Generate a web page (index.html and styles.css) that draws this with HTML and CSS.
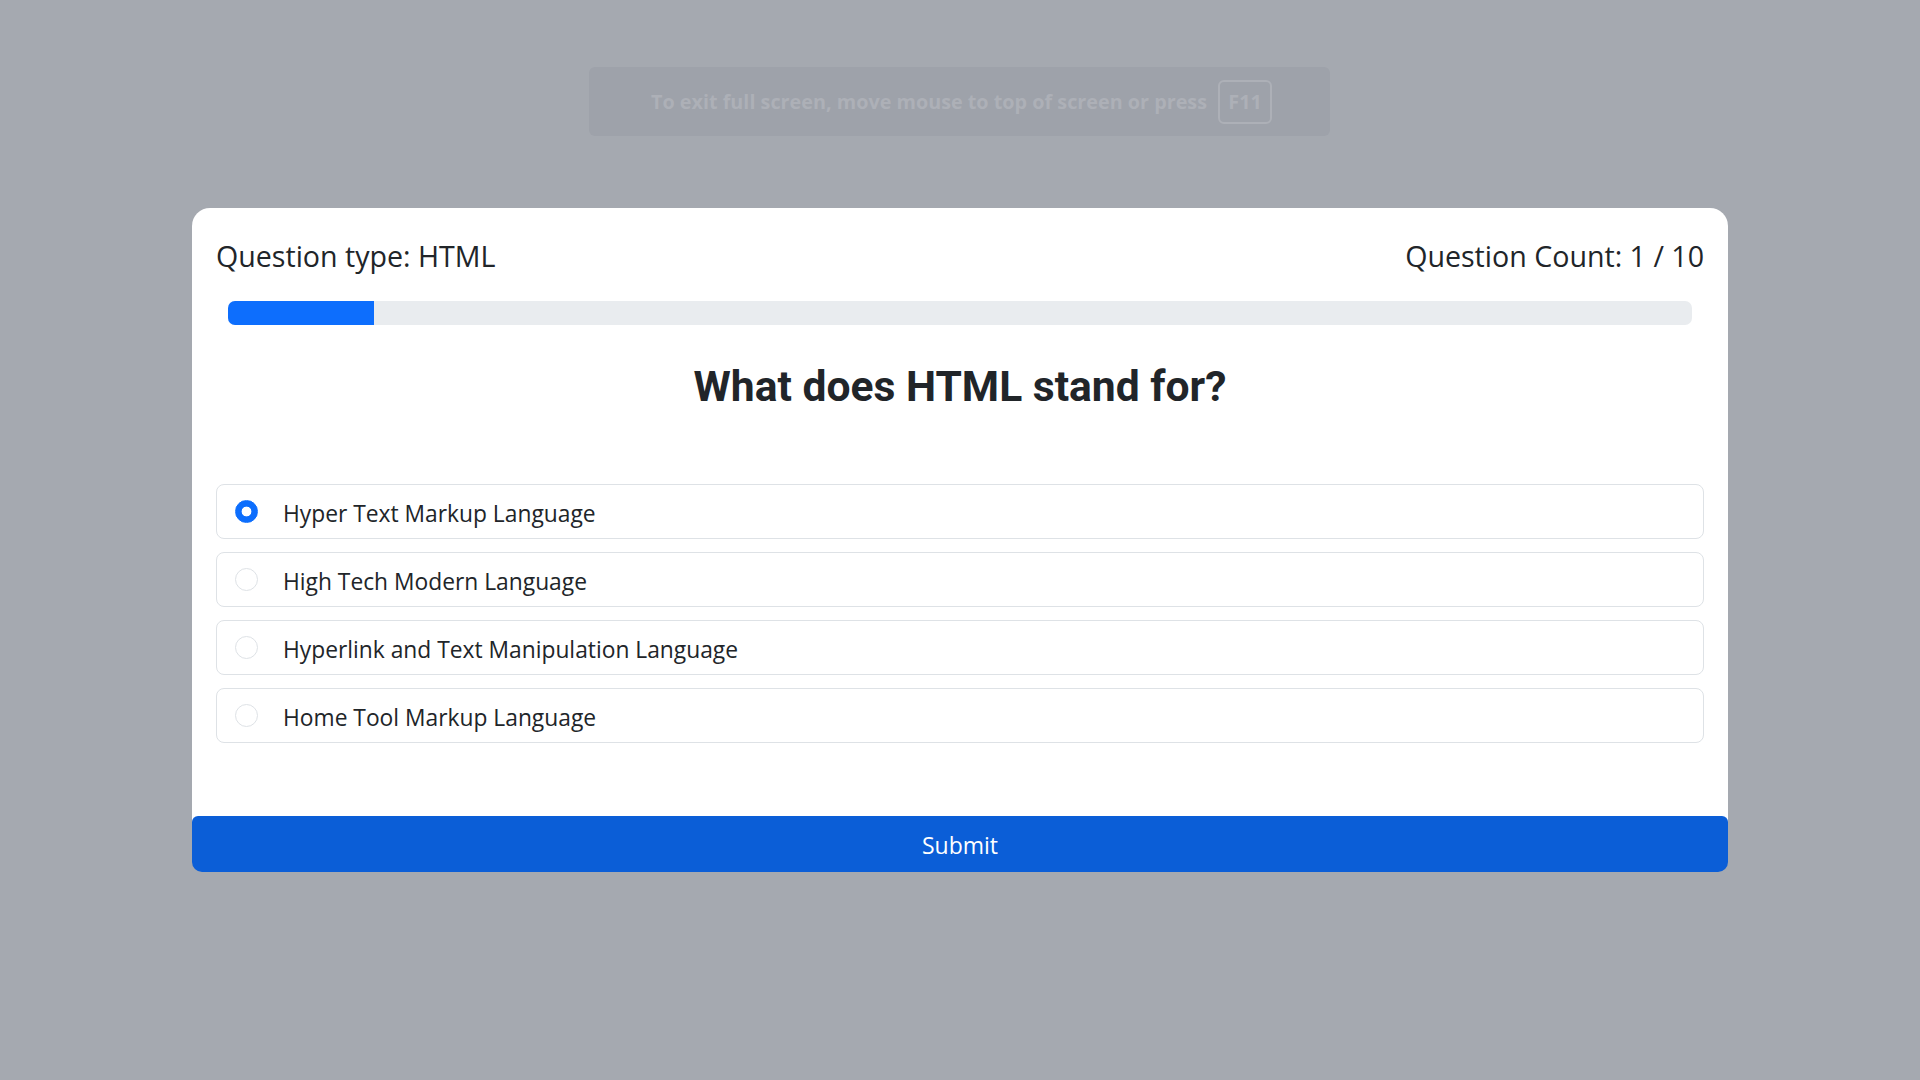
FILE: index.html
```html
<!DOCTYPE html>
<html lang="en">
<head>
<meta charset="utf-8">
<title>Quiz</title>
<link rel="stylesheet" href="styles.css">
</head>
<body>
<div class="fs-notice">
  <span class="fs-text">To exit full screen, move mouse to top of screen or press</span>
  <span class="fs-key">F11</span>
</div>
<main class="card">
  <div class="card-head">
    <div class="qtype">Question type: HTML</div>
    <div class="qcount">Question Count: 1 / 10</div>
  </div>
  <div class="progress"><div class="progress-fill" style="width:10%"></div></div>
  <h2 class="question">What does HTML stand for?</h2>
  <div class="options">
    <label class="option"><span class="radio checked"></span><span class="opt-text">Hyper Text Markup Language</span></label>
    <label class="option"><span class="radio"></span><span class="opt-text">High Tech Modern Language</span></label>
    <label class="option"><span class="radio"></span><span class="opt-text">Hyperlink and Text Manipulation Language</span></label>
    <label class="option"><span class="radio"></span><span class="opt-text">Home Tool Markup Language</span></label>
  </div>
  <button class="submit">Submit</button>
</main>
</body>
</html>
```
FILE: styles.css
```css
html, body {
  margin: 0;
  padding: 0;
}
body {
  background: #a5a9b0;
  min-height: 100vh;
  font-family: "Open Sans", "Noto Sans", sans-serif;
  color: #212529;
  padding-top: 208px;
  box-sizing: border-box;
}
.fs-notice {
  position: absolute;
  top: 67px;
  left: 589px;
  width: 741px;
  height: 69px;
  box-sizing: border-box;
  background: #9ea2aa;
  border-radius: 6px;
  display: flex;
  align-items: center;
  justify-content: center;
  gap: 11px;
  padding-left: 4px;
  font-weight: 700;
  font-size: 19.8px;
  color: #adb0b7;
}
.fs-key {
  display: inline-flex;
  align-items: center;
  justify-content: center;
  width: 54px;
  height: 44px;
  box-sizing: border-box;
  border: 2px solid #adb0b7;
  border-radius: 6px;
}
.card {
  width: 1536px;
  margin: 0 auto;
  background: #fff;
  border-radius: 18px;
  padding: 31px 24px 0;
  box-sizing: border-box;
  display: flex;
  flex-direction: column;
}
.card-head {
  display: flex;
  justify-content: space-between;
  font-size: 28.6px;
  line-height: 34px;
}
.progress {
  margin: 28px 12px 0;
  height: 24px;
  background: #e9ecef;
  border-radius: 7px;
  overflow: hidden;
}
.progress-fill {
  height: 100%;
  background: #0d6efd;
}
.question {
  margin: 35px 0 0;
  text-align: center;
  font-family: Roboto, "Open Sans", sans-serif;
  font-size: 42.6px;
  line-height: 53px;
  font-weight: 700;
}
.options {
  margin-top: 71px;
  display: flex;
  flex-direction: column;
  gap: 13px;
}
.option {
  display: flex;
  align-items: center;
  height: 55px;
  box-sizing: border-box;
  border: 1px solid #dee2e6;
  border-radius: 8px;
  padding-left: 18px;
  gap: 25px;
}
.radio {
  width: 23px;
  height: 23px;
  box-sizing: border-box;
  border-radius: 50%;
  border: 1px solid #dee2e6;
  background: #fff;
  flex: none;
}
.radio.checked {
  border-color: #0d6efd;
  background: radial-gradient(circle, #fff 0 4.6px, #0d6efd 5.2px);
}
.opt-text {
  font-size: 22.8px;
  line-height: 30px;
  padding-top: 5px;
}
.submit {
  margin: 73px -24px 0;
  height: 56px;
  padding-top: 2px;
  border: 0;
  border-radius: 6px 6px 10px 10px;
  background: #0b5ed7;
  color: #fff;
  font-family: inherit;
  font-size: 23px;
  line-height: 30px;
  cursor: pointer;
}
```
